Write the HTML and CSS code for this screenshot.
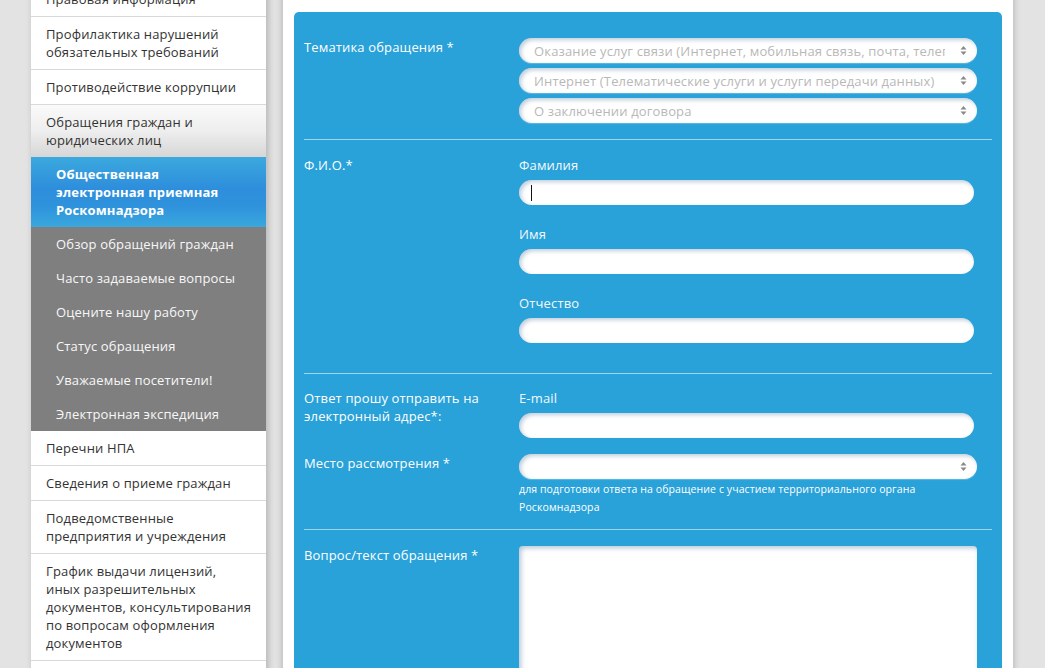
FILE: index.html
```html
<!DOCTYPE html>
<html lang="ru">
<head>
<meta charset="utf-8">
<title>Общественная электронная приемная</title>
<link rel="stylesheet" href="styles.css">
</head>
<body>
<div class="page">
  <nav class="sidebar">
    <ul class="menu">
      <li class="item">Правовая информация</li>
      <li class="item">Профилактика нарушений обязательных требований</li>
      <li class="item">Противодействие коррупции</li>
      <li class="item item-open">Обращения граждан и юридических лиц</li>
      <li class="sub sub-active">Общественная электронная приемная Роскомнадзора</li>
      <li class="sub">Обзор обращений граждан</li>
      <li class="sub">Часто задаваемые вопросы</li>
      <li class="sub">Оцените нашу работу</li>
      <li class="sub">Статус обращения</li>
      <li class="sub">Уважаемые посетители!</li>
      <li class="sub">Электронная экспедиция</li>
      <li class="item">Перечни НПА</li>
      <li class="item">Сведения о приеме граждан</li>
      <li class="item">Подведомственные предприятия и учреждения</li>
      <li class="item">График выдачи лицензий, иных разрешительных документов, консультирования по вопросам оформления документов</li>
      <li class="item item-empty"></li>
    </ul>
  </nav>

  <main class="main">
    <form class="panel">
      <section class="section sec-topic">
        <div class="label">Тематика обращения *</div>
        <div class="fields">
          <div class="select"><span class="sel-text">Оказание услуг связи (Интернет, мобильная связь, почта, телеграф, телевидение и радиовещание)</span><svg class="arrows" width="7" height="11" viewBox="0 0 7 11"><path d="M3.5 1 L6.5 4.5 L0.5 4.5 Z M0.5 6.5 L6.5 6.5 L3.5 10 Z" fill="#8a8a8a"/></svg></div>
          <div class="select"><span class="sel-text">Интернет (Телематические услуги и услуги передачи данных)</span><svg class="arrows" width="7" height="11" viewBox="0 0 7 11"><path d="M3.5 1 L6.5 4.5 L0.5 4.5 Z M0.5 6.5 L6.5 6.5 L3.5 10 Z" fill="#8a8a8a"/></svg></div>
          <div class="select"><span class="sel-text">О заключении договора</span><svg class="arrows" width="7" height="11" viewBox="0 0 7 11"><path d="M3.5 1 L6.5 4.5 L0.5 4.5 Z M0.5 6.5 L6.5 6.5 L3.5 10 Z" fill="#8a8a8a"/></svg></div>
        </div>
      </section>

      <section class="section sec-name">
        <div class="label">Ф.И.О.*</div>
        <div class="fields">
          <div class="group">
            <div class="field-label">Фамилия</div>
            <div class="input"><span class="caret"></span></div>
          </div>
          <div class="group">
            <div class="field-label">Имя</div>
            <div class="input"></div>
          </div>
          <div class="group">
            <div class="field-label">Отчество</div>
            <div class="input"></div>
          </div>
        </div>
      </section>

      <section class="section sec-contact">
        <div class="label">Ответ прошу отправить на электронный адрес*:</div>
        <div class="fields">
          <div class="field-label">E-mail</div>
          <div class="input"></div>
        </div>
        <div class="label">Место рассмотрения *</div>
        <div class="fields">
          <div class="select"><span class="sel-text"></span><svg class="arrows" width="7" height="11" viewBox="0 0 7 11"><path d="M3.5 1 L6.5 4.5 L0.5 4.5 Z M0.5 6.5 L6.5 6.5 L3.5 10 Z" fill="#8a8a8a"/></svg></div>
          <div class="note">для подготовки ответа на обращение с участием территориального органа Роскомнадзора</div>
        </div>
      </section>

      <section class="section sec-text">
        <div class="label">Вопрос/текст обращения *</div>
        <div class="fields">
          <div class="textarea"></div>
        </div>
      </section>
    </form>
  </main>
</div>
</body>
</html>
```

FILE: styles.css
```css
html, body {
  margin: 0;
  padding: 0;
  overflow: hidden;
}

body {
  background: #e3e3e3;
  font-family: "Open Sans", "Noto Sans", sans-serif;
  font-size: 13px;
  line-height: 18px;
  letter-spacing: 0.15px;
  color: #333;
}

.page {
  display: flex;
  align-items: flex-start;
  padding-left: 31px;
  margin-top: -18px;
}

/* Sidebar */
.sidebar {
  width: 235px;
  flex: none;
  background: #fff;
  box-shadow: 2px 0 7px rgba(0, 0, 0, 0.22);
  position: relative;
  z-index: 1;
}

.menu {
  list-style: none;
  margin: 0;
  padding: 0;
}

.item {
  padding: 8px 14px 8px 15px;
  border-bottom: 1px solid #d9d9d9;
  color: #333;
  background: #fff;
}

.item-empty {
  height: 18px;
}

.item-open {
  background: linear-gradient(to bottom, #fafafa 0%, #eeeeee 50%, #d6d6d6 100%);
  border-bottom: none;
}

.sub {
  padding: 8px 15px 8px 25px;
  background: #7f7f7f;
  color: #f7f7f7;
}

.sub-active {
  background: linear-gradient(to bottom, #3ba9de 0%, #2e8edc 45%, #2f92dc 70%, #3aa8de 100%);
  color: #fff;
  font-weight: bold;
  padding-right: 20px;
}

/* Main */
.main {
  flex: none;
  width: 708px;
  margin-left: 17px;
  min-height: 760px;
  background: #fff;
  padding: 30px 11px 0;
  box-shadow: 0 0 7px rgba(0, 0, 0, 0.25);
}

.panel {
  background: #29a1d9;
  border-radius: 5px 5px 0 0;
  padding: 0 10px;
  min-height: 740px;
  color: #fff;
}

.section {
  display: grid;
  grid-template-columns: 215px minmax(0, 1fr);
  border-bottom: 1px solid rgba(255, 255, 255, 0.55);
}

.sec-topic {
  padding: 26px 0 16px;
}

.sec-name {
  padding: 16px 0 10px;
}

.sec-contact {
  padding: 15px 0 13px;
  row-gap: 16px;
}

.sec-text {
  padding: 16px 0 0;
  border-bottom: none;
}

.label {
  color: #fff;
}

.fields {
  display: flex;
  flex-direction: column;
  min-width: 0;
  padding-right: 15px;
}

.sec-topic .fields {
  gap: 5px;
}

.group {
  margin-bottom: 20px;
}

.field-label {
  color: #f2fafe;
  margin-bottom: 6px;
}

.select {
  height: 25px;
  border-radius: 13px;
  background: #fff;
  box-shadow: inset 2px 2px 4px rgba(70, 110, 150, 0.35), 0 1px 1px rgba(255, 255, 255, 0.25);
  display: flex;
  align-items: center;
  padding: 0 10px 0 15px;
  color: #b8b8b8;
  white-space: nowrap;
  overflow: hidden;
  min-width: 0;
}

.sel-text {
  flex: 1;
  min-width: 0;
  overflow: hidden;
  margin-right: 15px;
}

.arrows {
  flex: none;
}

.input {
  height: 25px;
  margin-right: 3px;
  border-radius: 13px;
  background: #fff;
  box-shadow: inset 2px 2px 4px rgba(70, 110, 150, 0.35);
  display: flex;
  align-items: center;
  padding-left: 12px;
}

.caret {
  width: 1px;
  height: 16px;
  background: #111;
}

.note {
  font-size: 10.5px;
  line-height: 18px;
  letter-spacing: 0.1px;
  color: #fff;
  margin-top: 1px;
}

.textarea {
  height: 220px;
  border-radius: 4px;
  background: #fff;
  box-shadow: inset 2px 2px 5px rgba(70, 110, 150, 0.4);
}
```
